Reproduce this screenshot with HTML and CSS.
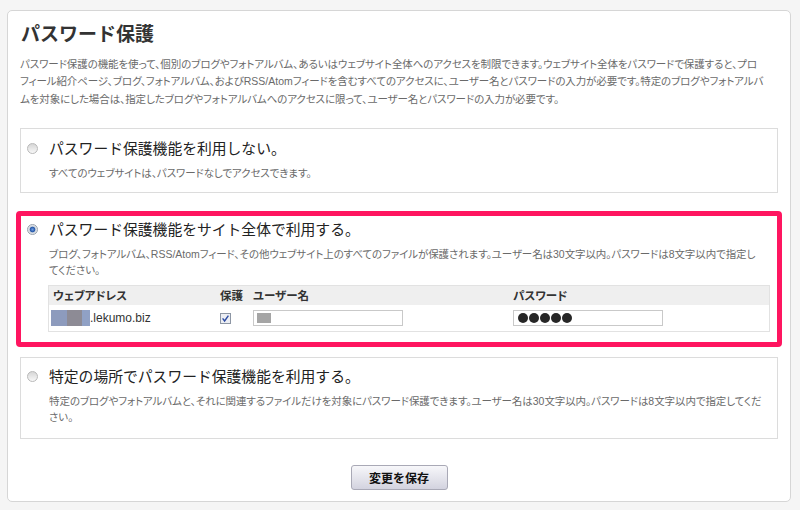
FILE: index.html
```html
<!DOCTYPE html>
<html lang="ja">
<head>
<meta charset="utf-8">
<title>パスワード保護</title>
<link rel="stylesheet" href="styles.css">
</head>
<body>
<div class="panel">
  <h1 class="title">パスワード保護</h1>
  <p class="intro">パスワード保護の機能を使って、個別のブログやフォトアルバム、あるいはウェブサイト全体へのアクセスを制限できます。ウェブサイト全体をパスワードで保護すると、プロ<br>フィール紹介ページ、ブログ、フォトアルバム、および<span class="lat">RSS/Atom</span>フィードを含むすべてのアクセスに、ユーザー名とパスワードの入力が必要です。特定のブログやフォトアルバ<br>ムを対象にした場合は、指定したブログやフォトアルバムへのアクセスに限って、ユーザー名とパスワードの入力が必要です。</p>

  <div class="option opt1">
    <span class="radio"></span>
    <div class="opt-title">パスワード保護機能を利用しない。</div>
    <div class="opt-desc">すべてのウェブサイトは、パスワードなしでアクセスできます。</div>
  </div>

  <div class="option opt2">
    <span class="radio checked"></span>
    <div class="opt-title">パスワード保護機能をサイト全体で利用する。</div>
    <div class="opt-desc">ブログ、フォトアルバム、<span class="lat">RSS/Atom</span>フィード、その他ウェブサイト上のすべてのファイルが保護されます。ユーザー名は<span class="lat">30</span>文字以内。パスワードは<span class="lat">8</span>文字以内で指定し<br>てください。</div>
    <div class="table">
      <div class="thead">
        <div class="cell c1">ウェブアドレス</div>
        <div class="cell c2">保護</div>
        <div class="cell c3">ユーザー名</div>
        <div class="cell c4">パスワード</div>
      </div>
      <div class="trow">
        <div class="cell c1"><span class="blur"><i class="b1"></i><i class="b2"></i><i class="b3"></i></span><span class="domain">.lekumo.biz</span></div>
        <div class="cell c2"><svg class="check" width="11" height="11" viewBox="0 0 11 11"><rect x="0.5" y="0.5" width="10" height="10" fill="#eceef3" stroke="#8d96a4"/><path d="M2.6 5.4 L4.6 8 L8.4 2.6" fill="none" stroke="#2c4ba3" stroke-width="1.4"/></svg></div>
        <div class="cell c3"><span class="field"><i class="mask"></i></span></div>
        <div class="cell c4"><span class="field pw"><i class="dot"></i><i class="dot"></i><i class="dot"></i><i class="dot"></i><i class="dot"></i></span></div>
      </div>
    </div>
  </div>

  <div class="option opt3">
    <span class="radio"></span>
    <div class="opt-title">特定の場所でパスワード保護機能を利用する。</div>
    <div class="opt-desc">特定のブログやフォトアルバムと、それに関連するファイルだけを対象にパスワード保護できます。ユーザー名は<span class="lat">30</span>文字以内。パスワードは<span class="lat">8</span>文字以内で指定してくだ<br>さい。</div>
  </div>

  <div class="actions"><button class="save" type="button">変更を保存</button></div>
</div>
</body>
</html>
```

FILE: styles.css
```css
* { box-sizing: border-box; }

body {
  margin: 0;
  background: #f5f5f5;
  font-family: "Noto Sans CJK JP", "Noto Sans", sans-serif;
  color: #333;
}

.panel {
  margin: 10px 9px 8px 7px;
  background: #fff;
  border: 1px solid #d6d6d6;
  border-radius: 5px;
  padding: 10px 12px 11px 12px;
}

.title {
  margin: 0;
  padding-left: 1px;
  font-size: 19px;
  line-height: 24px;
  font-weight: bold;
  color: #333;
}

.intro {
  margin: 10px 0 0;
  font-size: 10.5px;
  letter-spacing: -0.1px;
  line-height: 17px;
  color: #6a6a6a;
  white-space: nowrap;
  font-feature-settings: "palt";
}

.lat { font-family: "Liberation Sans", Arial, sans-serif; letter-spacing: 0; }

.option {
  display: grid;
  grid-template-columns: 11px minmax(0, 1fr);
  column-gap: 11px;
  border: 1px solid #dcdcdc;
  padding: 8px 7px 12px 6px;
}

.opt1 { margin-top: 21px; }

.opt2 {
  margin: 18px -4px 0;
  border: 5px solid #ff1560;
  border-radius: 4px;
  padding: 2px 7px 10px 6px;
}

.opt3 {
  margin-top: 10px;
  padding-top: 7px;
  padding-bottom: 14px;
}

.radio {
  grid-column: 1;
  grid-row: 1;
  align-self: center;
  width: 11px;
  height: 11px;
  border-radius: 50%;
  border: 1px solid #b9b9b9;
  background: linear-gradient(#d6d6d6, #f8f8f8);
}

.radio.checked {
  border-color: #97a0ab;
  background: radial-gradient(circle, #6f9be0 0, #2558a8 2.4px, #c9d1dc 3.2px, #f4f4f4 5px);
}

.opt-title {
  grid-column: 2;
  grid-row: 1;
  font-size: 14.8px;
  line-height: 22px;
  color: #222;
  white-space: nowrap;
}

.opt-desc {
  grid-column: 2;
  margin-top: 6px;
  font-size: 10.5px;
  letter-spacing: -0.1px;
  line-height: 15px;
  color: #6a6a6a;
  white-space: nowrap;
  font-feature-settings: "palt";
}

.table {
  grid-column: 2;
  margin: 8px 0 0 -1px;
  border: 1px solid #e2e2e2;
}

.thead, .trow {
  display: grid;
  grid-template-columns: 167px 33px 260px minmax(0, 1fr);
  align-items: center;
}

.thead {
  height: 19px;
  background: #efefef;
  font-size: 11.5px;
  font-weight: bold;
  color: #333;
  font-feature-settings: "palt";
}

.thead .cell { padding-left: 4px; line-height: 19px; }

.trow { height: 26px; }

.trow .cell { padding-left: 4px; display: flex; align-items: center; }
.trow .c1 { padding-left: 2px; }

.blur { display: flex; height: 16px; }
.blur i { display: block; height: 16px; }
.blur .b1 { width: 16px; background: #8d9bbd; }
.blur .b2 { width: 15px; background: #8d8b95; }
.blur .b3 { width: 8px; background: #90a1c5; }

.domain {
  font-family: "Liberation Sans", Arial, sans-serif;
  font-size: 12px;
  color: #333;
}

.check { display: block; }

.field {
  display: flex;
  align-items: center;
  width: 150px;
  height: 16px;
  border: 1px solid #c9c9c9;
  background: #fff;
  padding-left: 3px;
}

.mask { display: block; width: 14px; height: 10px; background: #a5a5a5; }

.field.pw { padding-left: 4px; gap: 1px; }

.dot { display: block; width: 10px; height: 10px; border-radius: 50%; background: #262626; }

.actions {
  margin-top: 26px;
  display: flex;
  justify-content: center;
}

.save {
  width: 97px;
  height: 25px;
  border: 1px solid #a9a9b6;
  border-radius: 3px;
  background: linear-gradient(#f7f7fa, #d3d3df);
  font-family: "Noto Sans CJK JP", sans-serif;
  font-size: 12px;
  font-weight: bold;
  color: #111;
  padding: 0;
}
```
